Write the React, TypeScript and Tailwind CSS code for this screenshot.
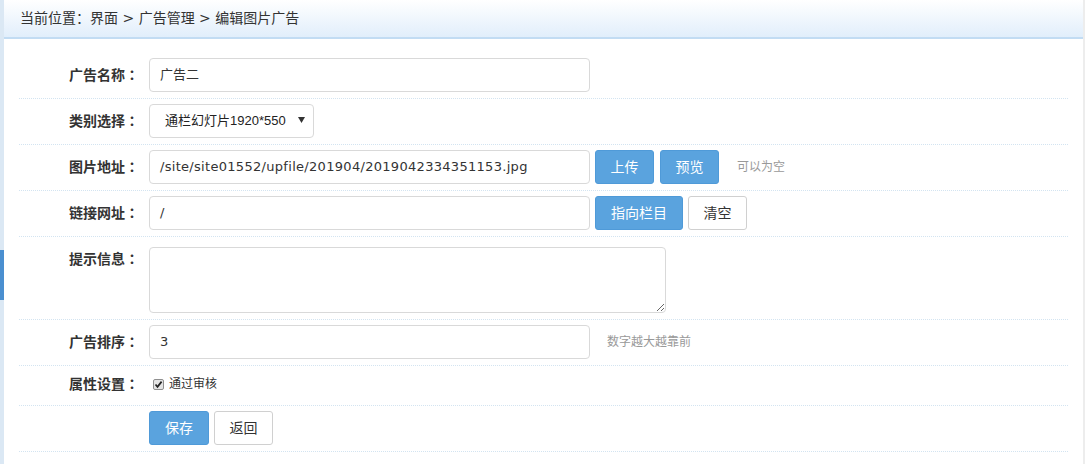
import React from "react";

const FONT = { fontFamily: '"DejaVu Sans", "Noto Sans CJK SC", sans-serif' };
const SELECT_FONT = { fontFamily: '"Liberation Sans", "Noto Sans CJK SC", sans-serif' };
const COLON_FONT = { fontFamily: '"Noto Sans CJK TC", sans-serif' };

function Row({
  label,
  children,
  labelClass = "h-[34px] leading-[34px]",
  rowClass = "items-start pt-[5px] pb-[6px]",
}: {
  label?: string;
  children: React.ReactNode;
  labelClass?: string;
  rowClass?: string;
}) {
  return (
    <div className={`flex border-b border-dotted border-[#d3e4f1] ${rowClass}`}>
      <div
        className={`w-[120px] shrink-0 text-right text-[14px] font-bold text-[#333] overflow-visible ${labelClass}`}
      >
        {label ? (
          <>
            {label}
            <span className="inline-block leading-none align-baseline" style={COLON_FONT}>
              ：
            </span>
          </>
        ) : null}
      </div>
      <div className="ml-[10px] flex items-center">{children}</div>
    </div>
  );
}

function TextInput({ value, w, extra = "" }: { value: string; w: string; extra?: string }) {
  return (
    <div
      className={`${w} h-[34px] rounded-[4px] border border-[#d9d9d9] bg-white pl-[10px] flex items-center text-[13px] text-[#333] ${extra}`}
    >
      {value}
    </div>
  );
}

function BlueBtn({ children, w }: { children: React.ReactNode; w: string }) {
  return (
    <div
      className={`${w} h-[34px] rounded-[3px] bg-[#5aa3de] border border-[#4f9ad8] text-white text-[14px] flex items-center justify-center`}
    >
      {children}
    </div>
  );
}

function WhiteBtn({ children, w }: { children: React.ReactNode; w: string }) {
  return (
    <div
      className={`${w} h-[34px] rounded-[3px] bg-white border border-[#d0d0d0] text-[#333] text-[14px] flex items-center justify-center`}
    >
      {children}
    </div>
  );
}

export default function App() {
  return (
    <div className="w-[1085px] h-[464px] flex bg-white overflow-hidden" style={FONT}>
      <div className="w-[4px] shrink-0 bg-[#dbe8f4] flex flex-col">
        <div className="h-[250px]" />
        <div className="h-[50px] bg-[#4a8fd0]" />
      </div>
      <div className="flex-1 flex flex-col">
        <div className="h-[39px] shrink-0 border-b-2 border-[#c2dcf3] bg-gradient-to-b from-white to-[#e1eefb] pl-[16px] flex items-center text-[14px] text-[#333]">
          当前位置：界面 &gt; 广告管理 &gt; 编辑图片广告
        </div>
        <div className="pt-[14px] pl-[15px] pr-[15px]">
          <Row label="广告名称">
            <TextInput value="广告二" w="w-[441px]" />
          </Row>
          <Row label="类别选择">
            <div
              className="w-[165px] h-[34px] rounded-[4px] border border-[#d9d9d9] bg-white pl-[15px] pr-[8px] flex items-center justify-between text-[13px] text-[#222]"
              style={SELECT_FONT}
            >
              <span>通栏幻灯片1920*550</span>
              <svg width="7" height="6" viewBox="0 0 7 6" className="mb-[3px]">
                <path d="M0 0 L7 0 L3.5 6 Z" fill="#333" />
              </svg>
            </div>
          </Row>
          <Row label="图片地址">
            <TextInput
              value="/site/site01552/upfile/201904/2019042334351153.jpg"
              w="w-[441px]"
              extra="tracking-[0.3px]"
            />
            <div className="ml-[5px] flex gap-[6px]">
              <BlueBtn w="w-[59px]">上传</BlueBtn>
              <BlueBtn w="w-[59px]">预览</BlueBtn>
            </div>
            <span className="ml-[18px] text-[12px] text-[#999]">可以为空</span>
          </Row>
          <Row label="链接网址">
            <TextInput value="/" w="w-[441px]" />
            <div className="ml-[5px] flex gap-[5px]">
              <BlueBtn w="w-[88px]">指向栏目</BlueBtn>
              <WhiteBtn w="w-[59px]">清空</WhiteBtn>
            </div>
          </Row>
          <Row label="提示信息">
            <textarea
              className="mt-[5px] w-[517px] h-[66px] rounded-[4px] border border-[#d9d9d9] bg-white outline-none"
              defaultValue=""
            />
          </Row>
          <Row label="广告排序">
            <TextInput value="3" w="w-[441px]" />
            <span className="ml-[17px] text-[12px] text-[#999]">数字越大越靠前</span>
          </Row>
          <Row
            label="属性设置"
            labelClass="h-[28px] leading-[28px]"
            rowClass="items-center pt-[4px] pb-[7px]"
          >
            <div className="h-[28px] flex items-center">
              <span className="ml-[4px] w-[11px] h-[11px] rounded-[2px] border border-[#8f8f8f] bg-[#e4e4e4] flex items-center justify-center">
                <svg width="9" height="9" viewBox="0 0 9 9">
                  <path d="M1.5 4.5 L3.5 6.8 L7.6 1.6" stroke="#222" strokeWidth="1.7" fill="none" />
                </svg>
              </span>
              <span className="ml-[5px] text-[12px] text-[#333]">通过审核</span>
            </div>
          </Row>
          <Row>
            <div className="flex gap-[5px]">
              <BlueBtn w="w-[60px]">保存</BlueBtn>
              <WhiteBtn w="w-[59px]">返回</WhiteBtn>
            </div>
          </Row>
        </div>
      </div>
      <div className="w-[2px] shrink-0 bg-[#ededed]" />
    </div>
  );
}
